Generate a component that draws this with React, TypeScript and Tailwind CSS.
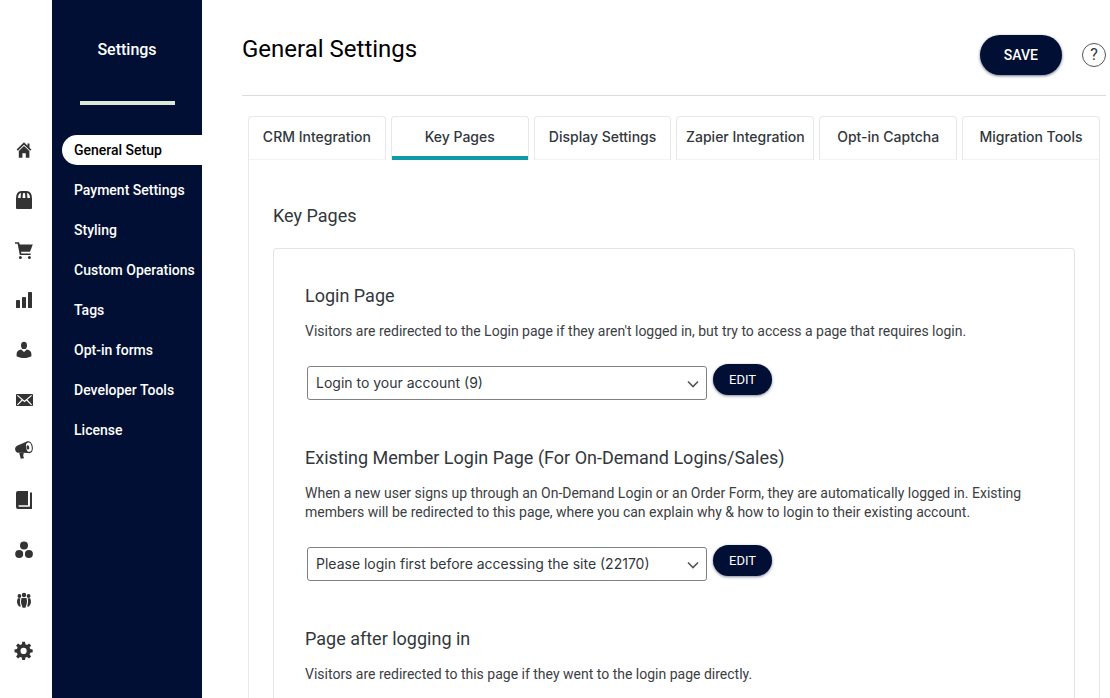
import React, { useState } from 'react';

interface IconProps {
  children: React.ReactNode;
}

function RailIcon({ children }: IconProps) {
  return (
    <svg viewBox="0 0 24 24" className="w-6 h-6" fill="currentColor" aria-hidden="true">
      {children}
    </svg>
  );
}

const railItems = [
  {
    label: 'Home',
    icon: (
      <RailIcon>
        <path d="M12 4.2 4.6 11.6l1.2 1.2L12 6.8l6.2 6 1.2-1.2-1.900-1.900V5.400h-2v2.300z" />
        <path d="M12 8 6.800 13v6.800h3.600v-4.600h3.400v4.600h3.600V13z" />
      </RailIcon>
    ),
  },
  {
    label: 'Products',
    icon: (
      <RailIcon>
        <path d="M4 10h16v10a1 1 0 0 1-1 1H5a1 1 0 0 1-1-1z" />
        <path d="M5 10.500C5 6 7 4 9.500 4h5C17 4 19 6 19 10.500M9.600 10.500c0-3 .1-4.500.9-6.500M14.400 10.500c0-3-.1-4.500-.9-6.500" fill="none" stroke="currentColor" strokeWidth="2" />
      </RailIcon>
    ),
  },
  {
    label: 'Orders',
    icon: (
      <RailIcon>
        <path d="M3 4.200h4l.8 2.400h13L18 13.800H9l.4 1.600h9.200V17H7.800L5.600 5.800H3z" />
        <circle cx="8.400" cy="19.400" r="1.500" />
        <circle cx="17.400" cy="19.400" r="1.500" />
      </RailIcon>
    ),
  },
  {
    label: 'Reports',
    icon: (
      <RailIcon>
        <rect x="4" y="12" width="4" height="8" rx="0.4" />
        <rect x="10" y="9" width="4" height="11" rx="0.4" />
        <rect x="16" y="4" width="4" height="16" rx="0.4" />
      </RailIcon>
    ),
  },
  {
    label: 'Members',
    icon: (
      <RailIcon>
        <ellipse cx="12" cy="7.4" rx="3" ry="3.6" />
        <path d="M9.200 11.400 12 14l2.800-2.600c2.800.4 4.600 2 4.600 4.600v2.200c-2 1.200-4.600 1.800-7.400 1.800s-5.400-.6-7.400-1.800V16c0-2.600 1.800-4.200 4.600-4.600z" />
      </RailIcon>
    ),
  },
  {
    label: 'Email',
    icon: (
      <RailIcon>
        <rect x="4" y="6" width="17" height="12" rx="0.8" />
        <path d="m5.400 7.400 7.100 6 7.100-6M5.400 16.800l4.800-4.800M19.600 16.800 14.800 12" fill="none" stroke="white" strokeWidth="1.2" />
      </RailIcon>
    ),
  },
  {
    label: 'Marketing',
    icon: (
      <RailIcon>
        <path d="M15.500 3.200 5 7.800c-1.800 1-2.300 3-1.600 4.700.6 1.700 2 2.500 3.800 2.300l10.300.3z" />
        <path d="m7.200 15 1.600 5.800 3.200-.6-.8-2.400.6-3z" />
        <ellipse cx="16.800" cy="9.200" rx="4" ry="6" transform="rotate(-10 16.8 9.2)" />
        <ellipse cx="16.900" cy="9.200" rx="2.800" ry="4.700" fill="white" transform="rotate(-10 16.9 9.2)" />
        <ellipse cx="15.900" cy="9.400" rx="1.300" ry="2.200" transform="rotate(-10 16 9.4)" />
      </RailIcon>
    ),
  },
  {
    label: 'Courses',
    icon: (
      <RailIcon>
        <path d="M6 3h10v14.200H6.600v1.600h11.200V4.600H20V21H6a2 2 0 0 1-2-2V5a2 2 0 0 1 2-2z" />
        <path d="M17 4v14" stroke="white" strokeWidth="1.600" />
      </RailIcon>
    ),
  },
  {
    label: 'Groups',
    icon: (
      <RailIcon>
        <circle cx="12" cy="7.600" r="4" />
        <circle cx="7.200" cy="16" r="4" />
        <circle cx="16.900" cy="16" r="4" />
      </RailIcon>
    ),
  },
  {
    label: 'Community',
    icon: (
      <RailIcon>
        <ellipse cx="12" cy="7" rx="2.200" ry="2.300" />
        <circle cx="7.400" cy="8" r="1.900" />
        <circle cx="16.600" cy="8" r="1.900" />
        <path d="M9.600 10h4.800c.9 2.600.8 5-.3 7.600l-.7 2.200h-2.800l-.7-2.200C8.800 15 8.700 12.600 9.600 10z" />
        <path d="M5.800 10.300h2.500c-.6 2.700-.5 5 .6 8.300H7.100C5 16.600 4.300 13 5.800 10.300zM18.200 10.300h-2.500c.6 2.700.5 5-.6 8.300h1.800c2.100-2 2.800-5.600 1.300-8.300z" />
      </RailIcon>
    ),
  },
  {
    label: 'Settings',
    icon: (
      <RailIcon>
        <path
          fillRule="evenodd"
          d="M10.200 3.800h2.800l.4 2.400 1.700.7 2-1.500 2 2-1.500 2 .7 1.700 2.400.4v2.800l-2.400.4-.7 1.700 1.500 2-2 2-2-1.500-1.700.7-.4 2.400h-2.800l-.4-2.400-1.700-.7-2 1.500-2-2 1.500-2-.7-1.700-2.400-.4v-2.800l2.400-.4.7-1.700-1.500-2 2-2 2 1.500 1.700-.7zM11.600 9.800a3.100 3.100 0 1 0 0 6.200 3.100 3.100 0 0 0 0-6.200z"
        />
      </RailIcon>
    ),
  },
];

const menuItems = [
  'General Setup',
  'Payment Settings',
  'Styling',
  'Custom Operations',
  'Tags',
  'Opt-in forms',
  'Developer Tools',
  'License',
];

const tabs = [
  'CRM Integration',
  'Key Pages',
  'Display Settings',
  'Zapier Integration',
  'Opt-in Captcha',
  'Migration Tools',
];

interface PageSettingProps {
  id: string;
  title: string;
  description: string;
  options?: string[];
}

function PageSetting({ id, title, description, options }: PageSettingProps) {
  return (
    <section>
      <h3 id={`${id}-title`} className="text-lg leading-6 text-[#32373c]">{title}</h3>
      <p className="mt-3.5 text-sm leading-[19px] text-[#3c4043]">{description}</p>
      {options && (
        <div className="mt-6 mb-[46px] ml-0.5 flex items-start gap-1.5">
          <div className="relative mt-px w-full max-w-[400px]">
            <select
              aria-labelledby={`${id}-title`}
              className="block w-full h-[34px] appearance-none rounded-[3px] border border-[#7e8083] bg-white pl-2 pr-8 font-['Inter',sans-serif] text-sm text-[#32373c]"
            >
              {options.map(option => (
                <option key={option}>{option}</option>
              ))}
            </select>
            <svg viewBox="0 0 12 12" className="pointer-events-none absolute right-2 top-3 w-3 h-3" fill="none" stroke="#555" strokeWidth="1.6" aria-hidden="true">
              <path d="m1 3.500 5 5 5-5" />
            </svg>
          </div>
          <button className="-mt-px h-[31px] shrink-0 rounded-full bg-[#000f33] px-4 text-[13px] text-white shadow-[0_1px_3px_rgba(0,15,51,0.5)]">
            EDIT
          </button>
        </div>
      )}
    </section>
  );
}

export default function App() {
  const [activeMenu, setActiveMenu] = useState('General Setup');
  const [activeTab, setActiveTab] = useState('Key Pages');

  return (
    <div className="flex min-h-screen bg-white font-['Roboto',sans-serif]">
      {/* Icon rail */}
      <nav aria-label="Main" className="w-[52px] shrink-0 pt-[125px] text-[#333]">
        {railItems.map(item => (
          <a key={item.label} href="#" aria-label={item.label} className="flex h-[50px] w-12 items-center justify-center">
            {item.icon}
          </a>
        ))}
      </nav>

      {/* Settings menu */}
      <aside className="w-[150px] shrink-0 bg-[#000f33] text-white">
        <h2 className="pt-[38px] text-center text-base leading-6 font-medium">Settings</h2>
        <div className="mx-auto mt-[39px] h-1 w-[95px] bg-[#dce8d6]" />
        <nav aria-label="Settings" className="mt-[30px] flex flex-col gap-2.5 pl-2.5">
          {menuItems.map(item => (
            <a
              key={item}
              href="#"
              onClick={() => setActiveMenu(item)}
              className={`flex h-[30px] items-center whitespace-nowrap rounded-l-full pl-3 text-sm font-medium ${
                item === activeMenu ? 'bg-white text-black' : 'text-white'
              }`}
            >
              {item}
            </a>
          ))}
        </nav>
      </aside>

      <main className="flex min-w-0 flex-1 flex-col pl-10 pr-1">
        <header className="flex h-24 items-center justify-between border-b border-[#dcdcde] pt-3.5">
          <h1 className="pb-3 text-2xl text-black">General Settings</h1>
          <div className="flex items-center gap-5">
            <button className="h-10 rounded-full bg-[#000f33] px-6 text-sm font-medium text-white shadow-[0_1px_3px_rgba(0,15,51,0.6)]">
              SAVE
            </button>
            <button aria-label="Help" className="flex h-6 w-6 items-center justify-center rounded-full border border-[#555] text-base text-[#333]">
              ?
            </button>
          </div>
        </header>

        <div className="mt-5 ml-1.5 mr-1.5 flex flex-1 flex-col">
          <div role="tablist" className="flex gap-[5px]">
            {tabs.map(tab => (
              <button
                key={tab}
                role="tab"
                aria-selected={tab === activeTab}
                onClick={() => setActiveTab(tab)}
                className={`h-11 flex-1 basis-0 whitespace-nowrap rounded-t border-x border-t border-[#e8e8ea] pb-1 font-['Inter',sans-serif] text-sm font-medium text-[#32373c] ${
                  tab === activeTab ? 'shadow-[inset_0_-4px_0_#0e9aa7]' : 'shadow-[inset_0_-1px_0_#f3f3f4]'
                }`}
              >
                {tab}
              </button>
            ))}
          </div>

          <div className="flex flex-1 flex-col border-x border-[#e8e8ea] px-6 pt-11">
            <h2 className="text-lg leading-6 text-[#32373c]">Key Pages</h2>
            <div className="mt-5 flex-1 rounded-t border border-b-0 border-[#e2e4e7] px-[31px] pt-[35px]">
              <PageSetting
                id="login"
                title="Login Page"
                description="Visitors are redirected to the Login page if they aren't logged in, but try to access a page that requires login."
                options={['Login to your account (9)']}
              />
              <PageSetting
                id="existing"
                title="Existing Member Login Page (For On-Demand Logins/Sales)"
                description="When a new user signs up through an On-Demand Login or an Order Form, they are automatically logged in. Existing members will be redirected to this page, where you can explain why & how to login to their existing account."
                options={['Please login first before accessing the site (22170)']}
              />
              <PageSetting
                id="after"
                title="Page after logging in"
                description="Visitors are redirected to this page if they went to the login page directly."
              />
            </div>
          </div>
        </div>
      </main>
    </div>
  );
}
